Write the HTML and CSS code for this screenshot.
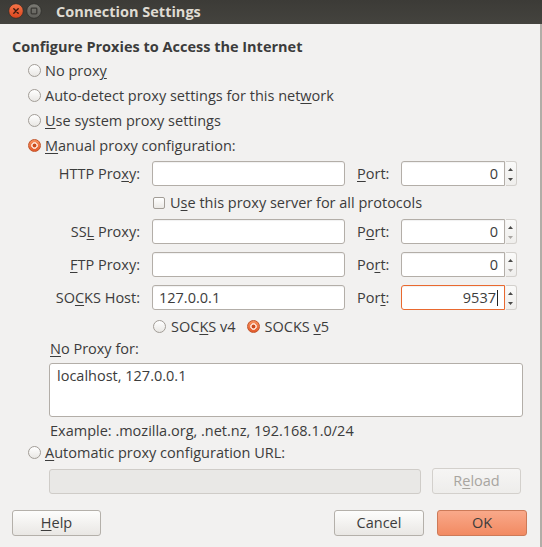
FILE: index.html
```html
<!DOCTYPE html>
<html>
<head>
<meta charset="utf-8">
<title>Connection Settings</title>
<link rel="stylesheet" href="styles.css">
</head>
<body>
<div class="window">
  <div class="titlebar">
    <div class="wbtns">
      <svg class="wbtn" width="16" height="16" viewBox="0 0 16 16">
        <defs>
          <linearGradient id="cg" x1="0" y1="0" x2="0" y2="1">
            <stop offset="0" stop-color="#f7764a"/>
            <stop offset="1" stop-color="#d9441c"/>
          </linearGradient>
        </defs>
        <circle cx="8" cy="8" r="7.3" fill="url(#cg)" stroke="#2f2e2b" stroke-width="0.8"/>
        <path d="M5.8 5.8 L10.2 10.2 M10.2 5.8 L5.8 10.2" stroke="#3b1a10" stroke-width="1.4" stroke-linecap="round"/>
      </svg>
      <svg class="wbtn" width="16" height="16" viewBox="0 0 16 16">
        <defs>
          <linearGradient id="mg" x1="0" y1="0" x2="0" y2="1">
            <stop offset="0" stop-color="#7b7a74"/>
            <stop offset="1" stop-color="#5f5e59"/>
          </linearGradient>
        </defs>
        <circle cx="8" cy="8" r="7.3" fill="url(#mg)" stroke="#2f2e2b" stroke-width="0.8"/>
        <rect x="5.2" y="5.2" width="5.6" height="5.6" rx="0.8" fill="none" stroke="#3a3935" stroke-width="1.3"/>
      </svg>
    </div>
    <div class="wtitle">Connection Settings</div>
  </div>

  <div class="content">
    <div class="heading">Configure Proxies to Access the Internet</div>

    <div class="radio-row"><span class="radio"></span><span>No prox<u>y</u></span></div>
    <div class="radio-row"><span class="radio"></span><span>Auto-detect proxy settings for this net<u>w</u>ork</span></div>
    <div class="radio-row"><span class="radio"></span><span><u>U</u>se system proxy settings</span></div>
    <div class="radio-row"><span class="radio on"></span><span><u>M</u>anual proxy configuration:</span></div>

    <div class="proxy-grid">
      <div class="flabel">HTTP Pro<u>x</u>y:</div>
      <div class="field"></div>
      <div class="plabel"><u>P</u>ort:</div>
      <div class="spin"><div class="field num">0</div><div class="spinbtn"><svg width="11" height="25" viewBox="0 0 11 25"><path d="M3 9 L5.5 6 L8 9 Z" fill="#4a4a48"/><path d="M3 16 L5.5 19 L8 16 Z" fill="#4a4a48"/></svg></div></div>

      <div class="check-row"><span class="check"></span><span>U<u>s</u>e this proxy server for all protocols</span></div>

      <div class="flabel">SS<u>L</u> Proxy:</div>
      <div class="field"></div>
      <div class="plabel">P<u>o</u>rt:</div>
      <div class="spin"><div class="field num">0</div><div class="spinbtn"><svg width="11" height="25" viewBox="0 0 11 25"><path d="M3 9 L5.5 6 L8 9 Z" fill="#4a4a48"/><path d="M3 16 L5.5 19 L8 16 Z" fill="#a9a6a2"/></svg></div></div>

      <div class="flabel"><u>F</u>TP Proxy:</div>
      <div class="field"></div>
      <div class="plabel">Po<u>r</u>t:</div>
      <div class="spin"><div class="field num">0</div><div class="spinbtn"><svg width="11" height="25" viewBox="0 0 11 25"><path d="M3 9 L5.5 6 L8 9 Z" fill="#4a4a48"/><path d="M3 16 L5.5 19 L8 16 Z" fill="#a9a6a2"/></svg></div></div>

      <div class="flabel">SO<u>C</u>KS Host:</div>
      <div class="field text">127.0.0.1</div>
      <div class="plabel">Por<u>t</u>:</div>
      <div class="spin"><div class="field num focus">9537<span class="caret"></span></div><div class="spinbtn"><svg width="11" height="25" viewBox="0 0 11 25"><path d="M3 9 L5.5 6 L8 9 Z" fill="#4a4a48"/><path d="M3 16 L5.5 19 L8 16 Z" fill="#4a4a48"/></svg></div></div>

      <div class="socks-row">
        <span class="radio"></span><span>SOC<u>K</u>S v4</span>
        <span class="radio on sp"></span><span>SOCKS <u>v</u>5</span>
      </div>
    </div>

    <div class="indent">
      <div class="noproxy-label"><u>N</u>o Proxy for:</div>
      <div class="textarea">localhost, 127.0.0.1</div>
      <div class="example">Example: .mozilla.org, .net.nz, 192.168.1.0/24</div>
    </div>

    <div class="radio-row"><span class="radio"></span><span><u>A</u>utomatic proxy configuration URL:</span></div>

    <div class="url-row">
      <div class="field disabled"></div>
      <div class="btn reload">R<u>e</u>load</div>
    </div>

    <div class="buttons">
      <div class="btn help"><u>H</u>elp</div>
      <div class="spacer"></div>
      <div class="btn cancel">Cancel</div>
      <div class="btn ok">OK</div>
    </div>
  </div>
</div>
</body>
</html>
```

FILE: styles.css
```css
html, body {
  margin: 0;
  padding: 0;
  background: #f2f1f0;
}
body {
  font-family: "Open Sans", "DejaVu Sans", sans-serif;
  font-size: 14.5px;
  color: #3c3c3c;
}
u {
  text-decoration: underline;
  text-decoration-thickness: 1px;
  text-underline-offset: 2px;
}
.window {
  width: 542px;
  height: 547px;
  overflow: hidden;
}
.titlebar {
  height: 24px;
  background: linear-gradient(#3c3b37, #44433e);
  display: flex;
  align-items: center;
}
.wbtns {
  display: flex;
  gap: 2px;
  padding-left: 8px;
  margin-top: -2px;
}
.wbtn {
  display: block;
}
.wtitle {
  margin-left: 14px;
  color: #dfdbd2;
  font-weight: bold;
  font-size: 14.5px;
  margin-top: -1px;
}
.content {
  box-sizing: border-box;
  height: 523px;
  padding: 14px 13px 0 12px;
  border-right: 2px solid #b1ada7;
}
.heading {
  font-weight: bold;
  line-height: 18px;
  height: 18px;
  margin-bottom: 2px;
}
.radio-row {
  height: 25px;
  display: flex;
  align-items: center;
  gap: 4px;
  padding-left: 16px;
  white-space: nowrap;
}
.radio {
  box-sizing: border-box;
  width: 13px;
  height: 13px;
  border-radius: 50%;
  border: 1px solid #a29d97;
  background: linear-gradient(#ffffff, #e9e7e4);
  flex: none;
}
.radio.on {
  border-color: #c2552b;
  background:
    radial-gradient(circle, #c94a1d 0 1.6px, #fbd7c6 2.2px 3.1px, transparent 3.6px),
    linear-gradient(#f8925f, #e35a2b);
}
.proxy-grid {
  margin-top: 3px;
  display: grid;
  grid-template-columns: 140px 193px 56px 116px;
  grid-template-rows: 25px 17px 25px 25px 25px 17px;
  row-gap: 8px;
}
.flabel {
  text-align: right;
  padding-right: 12px;
  line-height: 25px;
  white-space: nowrap;
}
.plabel {
  padding-left: 12px;
  line-height: 25px;
}
.field {
  box-sizing: border-box;
  height: 25px;
  border: 1px solid #b3aea8;
  border-radius: 3px;
  background: #ffffff;
  box-shadow: inset 0 1px 1px rgba(0,0,0,0.06);
  line-height: 23px;
  padding: 0 6px;
  white-space: nowrap;
}
.field.num {
  text-align: right;
  width: 104px;
  padding-right: 6px;
  border-radius: 3px 0 0 3px;
}
.field.focus {
  border-color: #e9692f;
}
.caret {
  display: inline-block;
  width: 1px;
  height: 16px;
  background: #222;
  vertical-align: middle;
  margin-left: 1px;
  margin-top: -2px;
}
.spin {
  display: flex;
  gap: 1px;
}
.spinbtn {
  box-sizing: border-box;
  width: 11px;
  height: 25px;
  border: 1px solid #d3d0cc;
  border-left: none;
  border-radius: 0 3px 3px 0;
  background: linear-gradient(#fafaf9, #efeeec);
}
.spinbtn svg {
  display: block;
  margin-left: -1px;
}
.check-row {
  grid-column: 2 / 5;
  display: flex;
  align-items: center;
  gap: 5px;
  padding-left: 1px;
  white-space: nowrap;
}
.check {
  box-sizing: border-box;
  width: 12px;
  height: 12px;
  border: 1px solid #a29d97;
  border-radius: 2px;
  background: linear-gradient(#ffffff, #ebe9e6);
  flex: none;
}
.socks-row {
  grid-column: 2 / 5;
  display: flex;
  align-items: center;
  gap: 5px;
  padding-left: 1px;
  white-space: nowrap;
}
.socks-row .sp {
  margin-left: 6px;
}
.indent {
  margin-left: 37px;
}
.noproxy-label {
  margin-top: 5px;
  line-height: 18px;
  padding-left: 1px;
}
.textarea {
  box-sizing: border-box;
  margin-top: 5px;
  width: 474px;
  height: 54px;
  border: 1px solid #b3aea8;
  border-radius: 3px;
  background: #fff;
  padding: 3px 7px;
  line-height: 18px;
}
.example {
  margin-top: 5px;
  line-height: 18px;
  padding-left: 1px;
}
.url-row {
  margin-left: 37px;
  margin-top: 3px;
  display: flex;
  align-items: flex-end;
  gap: 11px;
}
.field.disabled {
  width: 372px;
  background: #e9e8e6;
  border-color: #cfccc8;
  box-shadow: none;
}
.btn {
  box-sizing: border-box;
  height: 26px;
  border: 1px solid #b4b0aa;
  border-radius: 3px;
  background: linear-gradient(#fdfdfc, #e9e7e4);
  text-align: center;
  line-height: 24px;
  width: 90px;
}
.btn.reload {
  width: 89px;
  color: #a8a5a0;
  border-color: #d3d0cc;
  background: linear-gradient(#f6f5f4, #eeedeb);
}
.buttons {
  margin-top: 16px;
  display: flex;
}
.btn.help {
  width: 89px;
}
.spacer {
  flex: 1;
}
.btn.cancel {
  margin-right: 13px;
}
.btn.ok {
  border-color: #cd7a58;
  background: linear-gradient(#f9a98a, #f28a62);
}
```
